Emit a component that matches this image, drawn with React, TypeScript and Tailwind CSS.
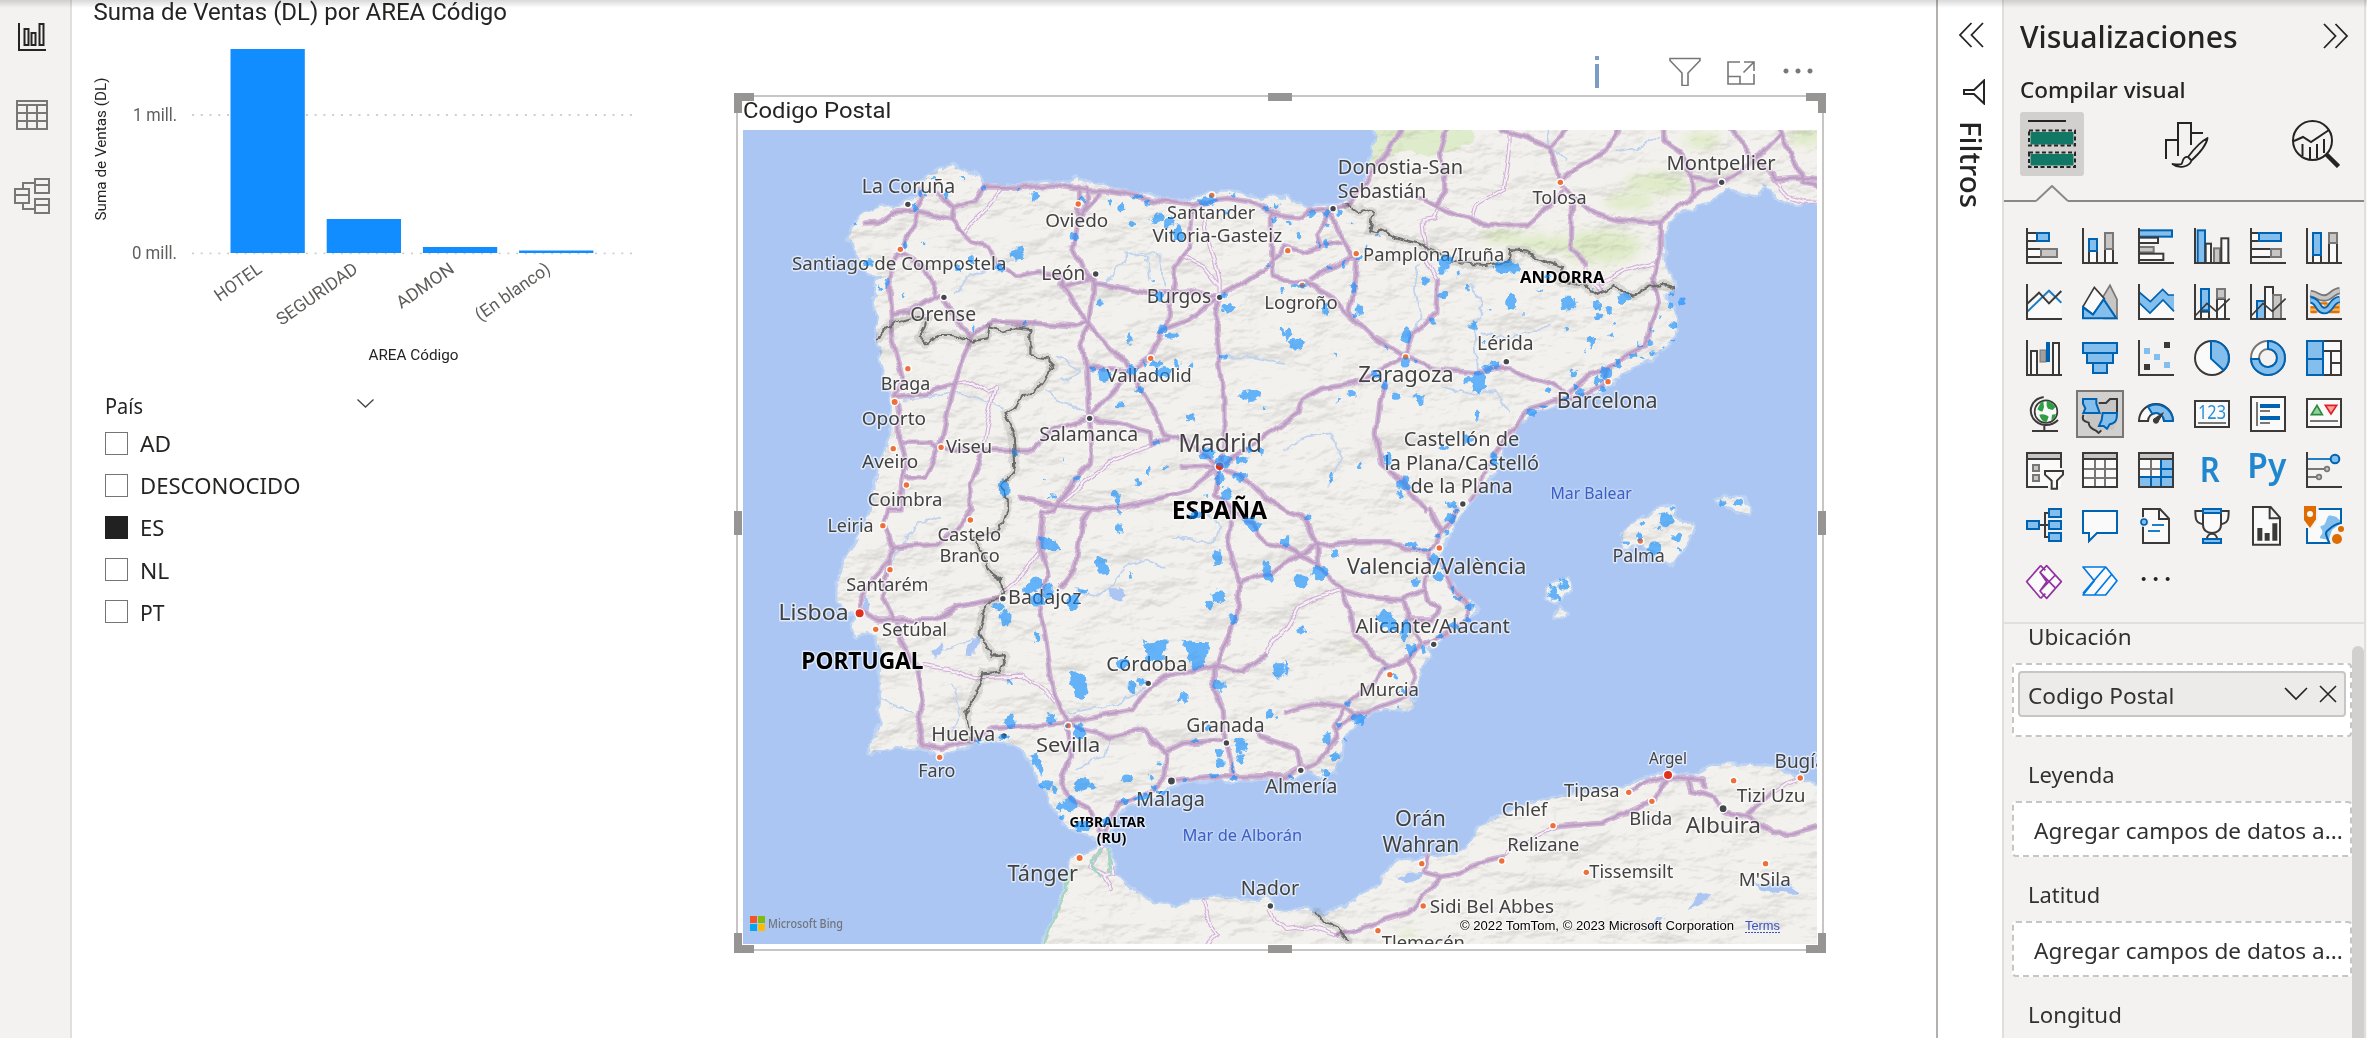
import { useLayoutEffect, useRef, useState } from "react";
import type { ReactNode } from "react";

/* ---------- text fitted to a given width ---------- */

function Fit({ w, className = "", children }: { w: number; className?: string; children: ReactNode }) {
  const ref = useRef<HTMLSpanElement>(null);
  const [scale, setScale] = useState(1);
  useLayoutEffect(() => {
    if (ref.current) setScale(w / ref.current.offsetWidth);
  }, [w]);
  return (
    <span
      ref={ref}
      className={`inline-block origin-left whitespace-nowrap ${className}`}
      style={{ transform: `scaleX(${scale})` }}
    >
      {children}
    </span>
  );
}

/* ---------- map geometry ---------- */

type Tile = "a" | "b" | "c" | "d";
const TILES: Record<Tile, [number, number, number]> = {
  a: [725, 80, 2.8],
  b: [1285, 50, 2.851],
  c: [725, 510, 2.8],
  d: [1285, 510, 2.851],
};

const px = (t: Tile, x: number) => TILES[t][0] + x / TILES[t][2];
const py = (t: Tile, y: number) => TILES[t][1] + y / 3;

/* A path is "a x,y x,y b x,y …": a letter selects the tile that the next points lie in. */
function path(src: string, close = false) {
  let tile: Tile = "a";
  const out: string[] = [];
  for (const tok of src.split(/\s+/)) {
    if (tok.length === 1) tile = tok as Tile;
    else {
      const [x, y] = tok.split(",").map(Number);
      out.push(`${px(tile, x).toFixed(1)},${py(tile, y).toFixed(1)}`);
    }
  }
  return "M" + out.join("L") + (close ? "Z" : "");
}

const LAND = [
  "a 425,775 430,720 420,690 425,640 420,610 440,590 400,575 385,560 370,520 368,500 345,475 355,445 375,420 395,400 430,385 480,378 510,365 535,350 545,330 525,320 560,300 575,280 590,275 605,262 612,272 640,255 655,272 690,280 710,290 722,315 800,318 850,312 920,308 965,312 975,300 985,292 1000,305 1030,312 1090,325 1140,340 1200,355 1260,362 1300,365 1340,345 1370,335 1410,335 1460,350 1500,360 1530,350 1568,360 b 0,440 30,455 60,475 110,470 140,470 170,460 200,435 225,405 245,340 258,260 262,220 1545,220 1545,465 1500,455 1470,465 1430,460 1400,445 1390,415 1360,405 1345,435 1300,430 1270,415 1240,430 1210,455 1160,475 1120,490 1095,520 1080,560 1080,600 1085,660 1110,700 1110,715 1085,730 1085,750 1105,780 1118,820 1110,860 1080,895 1040,930 960,965 940,990 900,1020 850,1040 790,1060 740,1075 700,1090 660,1130 630,1180 612,1230 590,1270 560,1310 530,1350 505,1385 d 490,25 465,80 445,110 440,150 450,180 470,220 500,255 525,275 550,298 520,320 490,345 460,370 430,395 405,420 412,440 392,460 380,500 375,530 350,565 375,580 350,600 300,595 260,600 220,620 190,650 165,690 160,740 140,780 110,805 85,790 50,785 20,810 0,805 c 1568,800 1430,812 1380,805 1300,812 1250,825 1200,860 1130,885 1100,910 1080,945 1068,990 1030,982 990,965 950,935 925,900 905,850 880,810 850,740 820,710 790,695 740,690 700,695 640,720 600,735 560,715 520,712 480,710 440,720 402,730 412,700 440,640 430,600 440,560 435,500 440,450 425,400 425,375 400,365 365,380 355,340 380,310 350,305 315,280 315,235 335,150 370,100 395,40 405,0 a 415,1260 425,1200 440,1140 465,1070 470,980 455,910 440,850",
  "c 880,1320 920,1230 945,1150 965,1080 970,1045 1000,1035 1050,1010 1080,1020 1090,1090 1130,1130 1200,1180 1260,1192 1340,1165 1420,1165 1500,1180 1510,1155 1525,1160 1535,1200 1568,1205 d 0,1205 60,1200 110,1212 180,1190 220,1150 270,1130 280,1090 330,1050 400,1045 440,1040 490,1035 520,1015 550,960 600,925 700,880 800,855 960,835 1040,800 1100,790 1160,800 1220,765 1400,770 1480,820 1545,830 1545,1330",
  "d 955,80 990,45 1040,10 b 1060,1380 1110,1372 d 1112,20 1130,42 1165,42 1150,90 1125,130 1100,160 1070,150 1050,125 1010,98 970,112",
  "b 1228,1352 1260,1342 1310,1350 1322,1375 d 1325,15 1300,10 1270,-8 1240,-20",
  "d 745,265 750,235 770,213 812,206 817,235 790,262 770,277",
  "d 770,318 782,290 805,315 785,320",
];

const BORDERS = [
  "a 425,775 470,730 540,708 565,715 560,738 545,770 560,790 600,768 640,768 690,785 735,775 740,742 780,752 810,745 855,750 855,825 900,835 920,855 890,910 860,942 830,945 815,980 785,1000 805,1050 810,1170 775,1220 792,1260 790,1290 c 785,10 770,60 690,85 715,110 735,180 775,210 780,245 725,300 710,370 750,440 785,435 770,485 725,490 700,560 675,600 690,690",
  "b 175,460 190,475 210,490 225,478 250,490 240,545 260,550 270,535 310,560 380,580 440,610 500,640 570,645 640,635 645,600 690,605 740,635 790,650 780,690 850,705 890,735 940,710 990,740 1040,710 1080,705 1110,715",
  "d 90,1205 110,1235 150,1255 180,1290",
];

const MAJOR = [
  "a 395,432 430,430 470,400 530,395 555,350 548,325",
  "a 600,345 640,385 700,365 725,320 800,322 850,322 915,315 970,325 1010,330 1080,335 1150,350 1230,365 1310,375 1360,362 1400,355 1470,365 1530,395 1568,410",
  "b 0,500 50,505 70,485 135,478 180,460 230,400 260,345 300,300 330,240",
  "a 540,400 500,500 465,550 460,650 465,700 470,780 490,860 500,900 475,950 485,1000 490,1080 510,1150 495,1200 490,1290 c 455,0 445,40 470,110 460,150 400,220 375,290",
  "a 540,400 635,420 665,460 690,485 740,500 760,550 820,585 880,575 940,590 950,625 1010,605 1035,590",
  "a 640,385 635,420",
  "a 490,520 560,560 585,610 580,650 610,650",
  "a 580,650 520,690 470,700",
  "a 610,655 640,710 690,765 750,725 850,728 980,738 1015,728",
  "a 940,610 1015,728 1130,860 1160,920 1230,1060 1290,1080 1385,1160",
  "a 1035,590 1030,650 1020,740 995,790 1010,860 1015,1000 1025,1080 1020,1150 970,1210 920,1290 c 890,0 880,100 905,200 880,280 900,400 920,550 955,630",
  "a 990,325 990,420 975,500 1000,560 1035,610 1100,620 1180,640 1290,630 1385,650",
  "a 1015,325 1015,375 990,420",
  "a 1055,335 1010,390",
  "a 1385,650 1450,610 1520,560 b 0,590 50,605 100,590 160,580",
  "a 1385,650 1375,740 1385,850 1400,960 1400,1080 1385,1160",
  "a 1385,650 1300,720 1230,750 1190,830 1130,870 1010,860",
  "a 1310,385 1300,500 1260,560 1240,740",
  "a 1020,1010 1140,870",
  "a 1020,1020 1100,1030 1190,1060 1195,1095 1240,1070",
  "a 1020,1015 920,1050 860,1110 750,1110 610,1105 575,1090 500,1090",
  "a 690,775 660,860 640,920 620,1000 600,1100 560,1190 510,1190",
  "a 475,950 560,940 640,915",
  "a 1530,395 1530,500 1535,590 b 0,690 60,700 130,740 190,800 250,860 340,920",
  "b 340,920 430,955 540,965 640,950 700,985 760,1005 800,1030 870,975 920,960 980,915 1030,890 1040,820 1065,760 1050,680 1070,600 1070,520",
  "b 920,960 910,1000 860,1030 780,1050 700,1075 640,1150 590,1220 560,1290 530,1350",
  "d 490,0 470,40 440,80 415,120",
  "b 340,920 200,1000 110,1015 50,1050 40,1090 0,1115 a 1500,1080 1430,1130 1385,1160",
  "b 285,1000 270,1060 260,1150 275,1240 330,1290 400,1380",
  "d 415,0 450,70",
  "b 340,920 370,850 430,790 435,690",
  "b 205,620 200,700 185,780 200,810",
  "b 75,690 130,650 200,620 150,540 135,490",
  "b 130,490 90,550 100,590",
  "b 460,240 440,310 455,370 455,430 430,465",
  "b 380,440 430,465 530,505 580,530 690,525 790,430",
  "b 790,410 755,290 690,265 620,240",
  "b 755,290 800,240",
  "b 790,390 850,340 920,300 950,240",
  "b 800,420 880,490 950,510 1070,518 1160,440 1245,395 1340,330 1415,250",
  "b 1245,395 1160,380 1140,320 1080,275 1080,240",
  "b 820,470 815,600 860,640",
  "b 1160,380 1165,430",
  "b 1280,240 1330,320 1400,390 1460,385 1530,390",
  "b 1410,240 1440,300 1480,400 1530,410",
  "a 1385,1160 1300,1230 1200,1260 1060,1290 930,1275 830,1255",
  "c 1030,0 1000,30 980,180 940,230",
  "a 1280,1165 1385,1160 1370,1240 1422,1290",
  "c 1422,0 1412,100 1442,225 1430,330 1380,460 1230,500 1180,540 1140,600 955,635",
  "c 1442,220 1500,195 1545,180 d 0,165 45,135 90,105 200,95 300,95 360,120 415,120",
  "a 1385,1160 1442,1185 1512,1254 d 0,3 43,15 70,55 91,105 93,170",
  "c 1422,0 1478,40 1490,75 1520,98 1545,103 d 20,125 93,165 160,240 240,262 330,270 400,240 415,130",
  "d 160,240 190,310 200,370 290,475 360,440 390,400 350,330 335,270",
  "d 290,475 180,580 140,650 150,680 90,760 45,780 35,720 0,705 c 1500,680 1490,660",
  "d 0,610 100,580 170,590 200,620",
  "d 350,440 370,500 350,560 270,590 200,620 150,660",
  "d 440,150 480,240 520,290 520,330 460,370 400,400",
  "d 400,240 405,270 435,290 420,330 350,330",
  "c 1370,460 1370,540 1395,600 1400,690 1420,790",
  "c 1370,465 1450,485 1510,440",
  "c 955,635 1000,660 1080,680 1170,660 1240,730 1235,800 1180,850 1100,880 1070,940 1060,980",
  "c 1240,720 1280,700 1400,690",
  "c 1250,812 1350,800 1568,800 d 50,770",
  "c 955,640 970,740 940,820 970,870 1020,890 1060,980",
  "c 955,640 800,655 740,660 700,690 640,705 600,715 550,705 540,640 555,570 540,480 490,390 480,340",
  "c 375,300 430,330 590,330 650,290 770,265",
  "c 460,150 440,260 470,330",
  "c 470,110 600,100 660,50 690,0 a 685,1210 720,1120",
  "d 150,1275 260,1240 350,1210 400,1150 445,1100 500,1090 580,1050 620,1040",
  "d 770,950 900,940 970,910 1050,870 1090,800 1190,810 1190,830",
  "d 980,845 1030,820 1090,800",
  "d 1150,810 1160,840 1220,860 1250,905 1320,920 1390,970 1450,970 1530,945",
  "d 1320,910 1385,850",
  "d 445,1100 400,1085 410,1040",
];

const MINOR = [
  "a 770,330 720,400 690,430 670,465",
  "a 1340,400 1345,450 1370,530 1385,600 1385,650",
  "a 1280,530 1340,560 1385,620",
  "a 720,1120 740,1000 760,920 740,935 690,905 650,910",
  "b 435,690 405,640 395,510 430,505 440,470",
  "b 640,240 640,290 620,420 540,470 530,500",
  "b 860,640 860,690 900,715",
  "b 900,700 960,665 1050,640",
  "b 1400,390 1430,440 1480,455 1530,455",
  "c 555,465 640,480 700,505 830,500 890,540 920,580",
  "c 780,245 830,200 880,130",
  "a 930,1280 1000,1210 1090,1140 1195,1095",
  "c 1510,440 1530,400 1568,360",
  "d 0,360 40,290 100,260 155,240",
  "c 1060,1010 1020,1070 1060,1095 1085,1090 1075,1050",
  "c 1060,1095 1080,1140",
  "c 1340,1170 1360,1240 1380,1270 1350,1305",
  "c 1525,1200 1540,1230 1568,1260 d 80,1250 150,1275",
  "d 620,1040 650,1010 770,950",
  "d 1385,850 1430,820 1470,805",
];

const RIVERS = [
  "a 640,640 680,590 760,560 810,540",
  "a 930,830 960,850 990,870 960,900 940,890",
  "a 900,930 930,960 980,980 1010,1000",
  "a 1060,620 1100,560 1130,520 1180,530 1190,600",
  "a 1400,830 1480,830 1568,850",
  "a 780,980 700,950 640,940 500,960",
  "a 1120,520 1220,520 1230,620",
  "b 550,960 540,850 560,760 530,700",
  "b 380,640 370,720 390,800 350,860",
  "b 450,1010 520,1030 600,1020 640,1090",
  "b 560,850 640,860 760,830",
  "b 800,330 760,300 750,240",
  "b 940,300 1010,290 1070,260",
  "b 0,1200 60,1160 130,1150 160,1230 120,1310",
  "c 980,230 1030,260 1080,230 1130,160 1170,150 1230,170",
  "c 620,420 680,390 710,380 700,430",
  "c 440,570 500,600 530,610",
  "c 1260,80 1370,100 1390,50 1340,0",
  "c 960,610 1100,580 1200,520",
  "c 980,780 1060,740 1080,690",
  "c 460,160 540,40 600,20",
  "c 640,520 660,620 640,660",
];

/* Green lowlands and woods: centre, radii */
const WOODS: [Tile, number, number, number, number][] = [
  ["b", 900, 590, 110, 50],
  ["b", 620, 560, 60, 22],
  ["b", 1060, 400, 90, 30],
  ["b", 980, 455, 70, 22],
  ["b", 740, 580, 80, 24],
  ["b", 1490, 260, 50, 26],
  ["b", 1190, 270, 50, 24],
  ["d", 195, 410, 14, 10],
  ["d", 350, 1275, 20, 14],
];

/* Postal-code areas: centre x, centre y, width, height */
const AREAS: [Tile, number, number, number, number][] = [
  ["a", 583, 296, 12, 8], ["a", 665, 296, 10, 12], ["a", 618, 350, 14, 24], ["a", 548, 338, 18, 20], ["a", 722, 326, 12, 12],
  ["a", 823, 330, 9, 9], ["a", 870, 345, 22, 26], ["a", 532, 380, 14, 24], ["a", 365, 433, 9, 9], ["a", 503, 497, 14, 24],
  ["a", 557, 492, 7, 7], ["a", 690, 540, 12, 24], ["a", 818, 517, 36, 36], ["a", 772, 562, 24, 26], ["a", 652, 562, 14, 14],
  ["a", 454, 615, 14, 26], ["a", 432, 630, 10, 12], ["a", 498, 644, 8, 16], ["a", 400, 550, 26, 18], ["a", 840, 726, 9, 14],
  ["a", 980, 468, 28, 14], ["a", 1003, 355, 12, 14], ["a", 1079, 367, 8, 14], ["a", 1110, 384, 16, 26], ["a", 1136, 435, 20, 20],
  ["a", 1150, 350, 34, 12], ["a", 1183, 368, 14, 20], ["a", 1212, 412, 40, 32], ["a", 1247, 425, 26, 24], ["a", 1272, 460, 30, 48],
  ["a", 1355, 365, 50, 30], ["a", 1422, 345, 14, 12], ["a", 1405, 398, 12, 12], ["a", 1515, 385, 16, 12], ["a", 1543, 378, 14, 16],
  ["a", 1536, 418, 12, 16], ["a", 1525, 556, 14, 8], ["a", 1562, 632, 12, 22], ["a", 1196, 604, 9, 12], ["a", 1215, 650, 24, 24],
  ["a", 1050, 668, 18, 22], ["a", 1398, 645, 18, 16], ["a", 1408, 680, 28, 30], ["a", 1132, 774, 16, 30], ["a", 1227, 748, 22, 26],
  ["a", 1252, 768, 38, 18], ["a", 695, 745, 6, 20], ["a", 1175, 852, 14, 14], ["a", 1208, 852, 38, 14], ["a", 1265, 850, 20, 20],
  ["a", 1306, 852, 12, 14], ["a", 1235, 875, 50, 26], ["a", 1140, 870, 30, 30], ["a", 1062, 890, 36, 40], ["a", 1028, 868, 14, 14],
  ["a", 1392, 832, 28, 12], ["a", 1157, 928, 24, 18], ["a", 1106, 974, 28, 18], ["a", 1308, 1012, 26, 18], ["a", 1475, 948, 66, 30],
  ["a", 1515, 987, 10, 12], ["a", 1562, 760, 12, 30], ["a", 1207, 1088, 18, 18], ["a", 1232, 1160, 14, 8], ["a", 1183, 1170, 18, 24],
  ["a", 1160, 1205, 18, 24], ["a", 1093, 1243, 26, 24], ["a", 1101, 1272, 8, 36], ["a", 985, 1196, 22, 18], ["a", 914, 1248, 18, 14],
  ["a", 895, 1195, 5, 5], ["a", 811, 1118, 14, 20], ["a", 783, 1222, 30, 44], ["a", 947, 1140, 6, 6], ["a", 1445, 1190, 38, 26],
  ["a", 1385, 1200, 22, 40], ["a", 1402, 1245, 28, 40], ["a", 1440, 1140, 40, 20], ["a", 1345, 1120, 44, 30], ["a", 1395, 1140, 40, 40],
  ["a", 1350, 1248, 8, 10], ["a", 1502, 1115, 18, 24], ["a", 1470, 1112, 20, 16],
  ["b", 75, 492, 18, 22], ["b", 118, 492, 22, 20], ["b", 155, 490, 14, 20], ["b", 40, 558, 12, 22], ["b", 120, 525, 12, 10],
  ["b", 118, 580, 14, 26], ["b", 99, 584, 9, 12], ["b", 194, 526, 6, 6], ["b", 10, 515, 18, 10], ["b", 265, 558, 14, 10],
  ["b", 212, 622, 22, 14], ["b", 231, 590, 8, 24], ["b", 197, 712, 16, 36], ["b", 168, 645, 10, 24], ["b", 128, 655, 12, 12],
  ["b", 213, 783, 22, 28], ["b", 197, 793, 10, 12], ["b", 115, 775, 14, 40], ["b", 43, 706, 46, 12], ["b", 400, 690, 22, 24],
  ["b", 453, 735, 26, 18], ["b", 460, 640, 38, 46], ["b", 445, 665, 18, 26], ["b", 495, 673, 12, 14], ["b", 518, 714, 20, 12],
  ["b", 643, 752, 26, 46], ["b", 582, 782, 8, 5], ["b", 682, 790, 5, 8], ["b", 728, 722, 14, 8], ["b", 633, 655, 72, 36],
  ["b", 750, 680, 16, 14], ["b", 803, 760, 44, 42], ["b", 888, 765, 26, 26], ["b", 892, 798, 20, 16], ["b", 925, 778, 16, 20],
  ["b", 877, 718, 7, 8], ["b", 970, 745, 38, 32], ["b", 1103, 734, 12, 12], ["b", 1130, 755, 16, 22], ["b", 1098, 768, 16, 14],
  ["b", 1105, 822, 20, 18], ["b", 1068, 795, 6, 10], ["b", 1047, 842, 9, 8], ["b", 940, 823, 9, 9], ["b", 932, 855, 18, 14],
  ["b", 872, 877, 18, 32], ["b", 855, 904, 5, 5], ["b", 800, 836, 12, 16], ["b", 536, 826, 26, 22], ["b", 423, 810, 16, 26],
  ["b", 349, 856, 28, 46], ["b", 345, 940, 22, 30], ["b", 290, 895, 10, 6], ["b", 372, 932, 10, 10], ["b", 253, 972, 26, 18],
  ["b", 285, 1003, 18, 24], ["b", 145, 912, 8, 10], ["b", 193, 1030, 26, 20], ["b", 157, 1052, 8, 9], ["b", 313, 1041, 26, 22],
  ["b", 381, 1050, 24, 32], ["b", 547, 1094, 16, 28], ["b", 545, 985, 46, 40], ["b", 578, 955, 30, 28], ["b", 602, 940, 26, 22],
  ["b", 556, 1010, 42, 34], ["b", 525, 990, 24, 18], ["b", 567, 875, 12, 10], ["b", 820, 972, 20, 20], ["b", 746, 1020, 18, 16],
  ["b", 915, 965, 34, 40], ["b", 893, 988, 20, 26], ["b", 905, 1018, 26, 10], ["b", 845, 1030, 28, 16], ["b", 800, 1045, 18, 12],
  ["b", 735, 1072, 24, 10], ["b", 700, 1084, 28, 20], ["b", 990, 916, 26, 12], ["b", 1048, 907, 18, 16], ["b", 1015, 882, 16, 8],
  ["b", 1043, 880, 16, 10], ["b", 948, 945, 20, 26], ["b", 1020, 928, 18, 10], ["b", 1078, 890, 10, 8], ["b", 1105, 868, 12, 6],
  ["b", 8, 850, 14, 36], ["b", 35, 880, 40, 34], ["b", 525, 1168, 28, 22], ["b", 455, 1194, 26, 14], ["b", 595, 1232, 22, 36],
  ["b", 293, 1232, 18, 36], ["b", 336, 1298, 36, 36], ["b", 327, 1330, 14, 24], ["b", 215, 1245, 12, 20], ["b", 134, 1282, 14, 32],
  ["b", 476, 1365, 34, 24], ["b", 1292, 1358, 28, 18], ["b", 1245, 1362, 14, 18], ["b", 1105, 1376, 18, 8], ["b", 828, 1010, 14, 14],
  ["c", 1107, 50, 14, 34], ["c", 1105, 5, 10, 16], ["c", 1138, 196, 12, 8],
  ["c", 1385, 262, 36, 40], ["c", 1357, 285, 26, 16], ["c", 1421, 330, 24, 30],
  ["c", 1315, 14, 36, 22], ["c", 1562, 95, 18, 20], ["c", 870, 220, 34, 40], ["c", 908, 240, 34, 40],
  ["c", 850, 240, 22, 30], ["c", 875, 275, 38, 40], ["c", 972, 280, 36, 44], ["c", 1000, 243, 34, 14], ["c", 875, 380, 18, 22],
  ["c", 785, 320, 30, 50], ["c", 768, 288, 34, 24], ["c", 797, 518, 16, 8], ["c", 1383, 530, 34, 36],
  ["c", 1282, 563, 24, 28], ["c", 1138, 530, 14, 36], ["c", 1160, 512, 26, 16], ["c", 1112, 456, 34, 32],
  ["c", 1552, 478, 34, 46], ["c", 1525, 612, 18, 24], ["c", 1546, 625, 10, 10],
  ["c", 798, 640, 24, 44], ["c", 912, 628, 22, 34], ["c", 990, 660, 36, 44], ["c", 958, 650, 14, 18], ["c", 780, 680, 28, 16],
  ["c", 707, 694, 24, 8], ["c", 1003, 825, 44, 46], ["c", 1030, 832, 20, 18], ["c", 1124, 808, 36, 24], ["c", 1190, 800, 9, 10],
  ["c", 1214, 760, 14, 12], ["c", 1317, 690, 20, 14], ["c", 1385, 728, 16, 28], ["c", 1388, 760, 30, 24], ["c", 1445, 710, 36, 40],
  ["c", 1443, 748, 22, 34], ["c", 1365, 797, 34, 14], ["c", 1423, 805, 26, 14], ["c", 897, 822, 40, 26],
  ["c", 925, 838, 16, 24], ["c", 970, 882, 48, 40], ["c", 943, 892, 26, 20], ["c", 1003, 955, 48, 28], ["c", 943, 923, 9, 9],
  ["c", 1117, 872, 24, 18], ["c", 1165, 860, 40, 20], ["c", 1220, 845, 26, 14], ["c", 1203, 830, 14, 14], ["c", 1068, 935, 24, 22],
  ["c", 1290, 808, 10, 8], ["c", 1350, 656, 12, 22], ["c", 1422, 780, 10, 30],
  ["d", 62, 20, 20, 18], ["d", 3, 90, 18, 36], ["d", 143, 127, 24, 28], ["d", 105, 187, 50, 42], ["d", 49, 216, 42, 40],
  ["d", 45, 367, 28, 26], ["d", 3, 475, 12, 44], ["d", 340, 350, 26, 40], ["d", 337, 378, 20, 26],
  ["d", 360, 415, 28, 32], ["d", 395, 420, 14, 18], ["d", 372, 218, 28, 20], ["d", 360, 107, 34, 22], ["d", 395, 119, 40, 8],
  ["d", 423, 148, 22, 32], ["d", 435, 200, 34, 20], ["d", 478, 240, 12, 22], ["d", 492, 263, 22, 12], ["d", 530, 290, 30, 18],
  ["d", 520, 327, 12, 10], ["d", 480, 350, 28, 18], ["d", 440, 380, 20, 16], ["d", 470, 25, 26, 26], ["d", 434, 75, 12, 14],
  ["d", 463, 68, 16, 14], ["d", 490, 2, 14, 10], ["d", 222, 184, 14, 10], ["d", 312, 500, 10, 14], ["d", 335, 545, 14, 24],
  ["d", 284, 477, 8, 10], ["d", 180, 578, 18, 22], ["d", 214, 625, 40, 34], ["d", 152, 642, 16, 14], ["d", 121, 686, 24, 30],
  ["d", 143, 740, 28, 20], ["d", 117, 790, 16, 24], ["d", 168, 688, 6, 10], ["d", 322, 590, 6, 6], ["d", 450, 170, 10, 16],
  ["d", 1088, 25, 38, 44], ["d", 1070, 55, 18, 14], ["d", 1022, 38, 10, 16], ["d", 1012, 82, 16, 22], ["d", 970, 100, 18, 10],
  ["d", 1050, 115, 38, 34], ["d", 1118, 82, 24, 30], ["d", 1125, 118, 10, 10], ["d", 766, 240, 24, 32], ["d", 800, 228, 30, 34],
  ["d", 770, 262, 34, 18], ["d", 15, 803, 9, 14],
];

/* Larger areas with their own outlines */
const AREA_SHAPES = [
  "c 1278,392 1310,396 1355,396 1350,430 1338,470 1310,483 1300,440",
  "c 1168,390 1185,402 1200,395 1210,388 1240,392 1238,412 1228,430 1222,448 1196,454 1176,446 1184,420",
  "c 966,486 992,484 1010,494 1012,520 1018,550 1000,570 986,566 974,540 968,520",
  "c 1034,140 1062,140 1068,158 1078,170 1072,192 1050,194 1040,170",
  "c 1366,126 1384,120 1392,140 1390,164 1370,168 1364,146",
  "c 876,74 900,84 925,90 942,124 906,122 882,112",
  "c 1508,156 1522,150 1528,180 1536,214 1516,210 1506,190",
  "c 1450,26 1478,22 1502,40 1496,62 1478,68 1466,50",
  "c 852,738 874,730 882,756 892,780 886,794 872,772",
  "d 264,318 276,302 296,304 304,320 320,334 318,356 298,364 278,350 266,330",
];

/* Irregular outline around a centre; the seed keeps it the same on every paint. */
function blob([t, cx, cy, w, h]: [Tile, number, number, number, number], seed: number) {
  const n = 11;
  const p: string[] = [];
  for (let i = 0; i < n; i++) {
    const r = 0.66 + 0.5 * Math.abs(Math.sin(seed * 12.9898 + i * 78.233));
    const a = (i / n) * Math.PI * 2;
    p.push(
      `${(px(t, cx) + (Math.cos(a) * r * w) / 2 / 2.7).toFixed(1)},${(py(t, cy) + (Math.sin(a) * r * h) / 2 / 2.8).toFixed(1)}`,
    );
  }
  return "M" + p.join("L") + "Z";
}

const DOTS: [Tile, number, number, "k" | "o" | "r", number?][] = [
  ["a", 512, 373, "k"], ["a", 491, 508, "o"], ["a", 613, 652, "k"], ["a", 989, 372, "o"], ["a", 1363, 346, "o"],
  ["a", 1038, 582, "k"], ["a", 1385, 652, "k"], ["a", 1192, 835, "o"], ["a", 512, 866, "o"], ["a", 475, 966, "o", 3],
  ["a", 471, 1106, "o"], ["a", 605, 1102, "o"], ["a", 508, 1215, "o"], ["a", 1021, 1015, "k"], ["a", 1385, 1159, "r", 3.8],
  ["b", 137, 476, "k"], ["b", 203, 611, "o"], ["b", 49, 706, "o"], ["b", 8, 602, "o"], ["b", 785, 397, "o"],
  ["b", 1245, 397, "k"], ["b", 344, 921, "o"], ["b", 631, 935, "k"], ["b", 921, 995, "o"], ["b", 507, 1362, "k"],
  ["c", 442, 47, "o"], ["c", 687, 30, "o"], ["c", 462, 179, "o"], ["c", 377, 310, "r", 4], ["c", 422, 358, "o"],
  ["c", 778, 266, "k"], ["c", 1185, 520, "k"], ["c", 961, 647, "o"], ["c", 781, 678, "k"], ["c", 601, 742, "o"],
  ["c", 1250, 813, "k", 3.4], ["c", 1404, 699, "k"], ["c", 993, 1044, "o", 3], ["c", 1527, 1188, "k"],
  ["d", 440, 114, "o"], ["d", 1013, 93, "o"], ["d", 424, 403, "k"], ["d", 299, 494, "o"], ["d", 45, 781, "k"],
  ["d", 1092, 795, "r", 4], ["d", 980, 847, "o"], ["d", 1046, 874, "o"], ["d", 764, 947, "o"], ["d", 618, 1053, "o"],
  ["d", 390, 1061, "o"], ["d", 394, 1188, "o"], ["d", 265, 1262, "o"], ["d", 859, 1087, "o"], ["d", 1370, 1061, "o"],
  ["d", 1249, 896, "k", 3.4], ["d", 1279, 812, "o"], ["d", 1469, 804, "o"],
];
const DOT_FILL = { k: "#45484b", o: "#ee6f38", r: "#e0301e" };

/* Place names: tile, left, right, baseline, size, text */
const PLACES: [Tile, number, number, number, number, string][] = [
  ["a", 385, 645, 338, 19.5, "La Coruña"],
  ["a", 190, 788, 571, 18.5, "Santiago de Compostela"],
  ["a", 521, 703, 723, 19.5, "Orense"],
  ["a", 899, 1073, 442, 18, "Oviedo"],
  ["a", 1240, 1485, 417, 18, "Santander"],
  ["a", 1199, 1560, 486, 18, "Vitoria-Gasteiz"],
  ["a", 888, 1009, 601, 19.5, "León"],
  ["a", 1183, 1361, 670, 19.5, "Burgos"],
  ["a", 1070, 1307, 905, 18, "Valladolid"],
  ["a", 438, 575, 930, 18, "Braga"],
  ["a", 385, 563, 1036, 18, "Oporto"],
  ["a", 621, 748, 1119, 18, "Viseu"],
  ["a", 386, 541, 1165, 18, "Aveiro"],
  ["a", 402, 609, 1279, 18, "Coimbra"],
  ["a", 882, 1157, 1082, 19.5, "Salamanca"],
  ["a", 1271, 1504, 1115, 24.5, "Madrid"],
  ["a", 1512, 1716, 686, 18, "Logroño"],
  ["b", 153, 508, 372, 19.5, "Donostia-San"],
  ["b", 153, 403, 443, 19.5, "Sebastián"],
  ["b", 225, 625, 633, 18, "Pamplona/Iruña"],
  ["b", 708, 860, 462, 18, "Tolosa"],
  ["b", 1090, 1399, 359, 19.5, "Montpellier"],
  ["b", 550, 709, 901, 19.5, "Lérida"],
  ["b", 211, 481, 995, 22, "Zaragoza"],
  ["b", 777, 1062, 1074, 22, "Barcelona"],
  ["b", 341, 668, 1189, 19.5, "Castellón de"],
  ["b", 286, 724, 1259, 19.5, "la Plana/Castelló"],
  ["b", 360, 649, 1329, 19.5, "de la Plana"],
  ["c", 289, 416, 66, 18, "Leiria"],
  ["c", 597, 773, 93, 18, "Castelo"],
  ["c", 603, 769, 156, 18, "Branco"],
  ["c", 342, 570, 242, 18, "Santarém"],
  ["c", 152, 346, 329, 22, "Lisboa"],
  ["c", 442, 622, 379, 18, "Setúbal"],
  ["c", 795, 998, 281, 19.5, "Badajoz"],
  ["c", 1070, 1295, 482, 19, "Córdoba"],
  ["c", 580, 757, 692, 19.5, "Huelva"],
  ["c", 873, 1051, 725, 20, "Sevilla"],
  ["c", 543, 645, 801, 18, "Faro"],
  ["c", 1294, 1511, 665, 20, "Granada"],
  ["c", 1153, 1344, 887, 20, "Málaga"],
  ["c", 1515, 1715, 848, 19.5, "Almería"],
  ["c", 793, 988, 1112, 22, "Tánger"],
  ["c", 1446, 1608, 1155, 20, "Nador"],
  ["d", 178, 688, 191, 22, "Valencia/València"],
  ["d", 203, 641, 369, 20, "Alicante/Alacant"],
  ["d", 213, 382, 558, 18, "Murcia"],
  ["d", 936, 1083, 157, 18, "Palma"],
  ["d", 316, 459, 949, 22, "Orán"],
  ["d", 280, 497, 1025, 22, "Wahran"],
  ["d", 1040, 1146, 763, 16, "Argel"],
  ["d", 798, 954, 860, 18, "Tipasa"],
  ["d", 620, 748, 917, 18, "Chlef"],
  ["d", 984, 1104, 944, 18, "Blida"],
  ["d", 1145, 1357, 970, 22, "Albuira"],
  ["d", 1290, 1484, 876, 18, "Tizi Uzu"],
  ["d", 1398, 1542, 773, 19, "Bugía"],
  ["d", 636, 839, 1022, 18, "Relizane"],
  ["d", 870, 1107, 1105, 18, "Tissemsilt"],
  ["d", 1296, 1442, 1127, 18, "M'Sila"],
  ["d", 415, 767, 1210, 18, "Sidi Bel Abbes"],
  ["d", 278, 513, 1318, 18, "Tlemecén"],
];
const COUNTRIES: [Tile, number, number, number, number, string][] = [
  ["a", 1253, 1518, 1318, 25, "ESPAÑA"],
  ["c", 216, 556, 476, 23.5, "PORTUGAL"],
  ["b", 672, 911, 700, 16.5, "ANDORRA"],
  ["c", 967, 1177, 950, 14.5, "GIBRALTAR"],
  ["c", 1043, 1124, 999, 14.5, "(RU)"],
];
const SEAS: [Tile, number, number, number, number, string][] = [
  ["b", 759, 989, 1347, 16, "Mar Balear"],
  ["c", 1283, 1616, 993, 16, "Mar de Alborán"],
];

function Label({ d: [t, l, r, y, size, s], className }: { d: [Tile, number, number, number, number, string]; className: string }) {
  return (
    <text
      x={px(t, l) - 0.8}
      y={py(t, y)}
      fontSize={size}
      textLength={(r - l) / TILES[t][2] + 0.8}
      lengthAdjust="spacingAndGlyphs"
      className={className}
      strokeWidth={3}
      strokeOpacity={0.6}
      strokeLinejoin="round"
      paintOrder="stroke"
    >
      {s}
    </text>
  );
}

const LAND_D = LAND.map((l) => path(l, true)).join("");
const MAJOR_D = MAJOR.map((l) => path(l)).join("");
const MINOR_D = MINOR.map((l) => path(l)).join("");
const RIVER_D = RIVERS.map((l) => path(l)).join("");
const BORDER_D = BORDERS.map((l) => path(l)).join("");

function IberiaMap() {
  return (
    <svg viewBox="743 130 1074 814" className="block h-[814px] w-[1074px] bg-[#abc6f2]">
      <defs>
        <clipPath id="land">
          <path d={LAND_D} />
        </clipPath>
        <filter id="relief" x="0" y="0" width="1" height="1" colorInterpolationFilters="sRGB">
          <feTurbulence type="fractalNoise" baseFrequency="0.018 0.034" numOctaves={5} seed={7} />
          <feDiffuseLighting surfaceScale={9} diffuseConstant={1.16} lightingColor="#ffffff">
            <feDistantLight azimuth={235} elevation={60} />
          </feDiffuseLighting>
        </filter>
        <filter id="rough" x="0" y="0" width="1" height="1">
          <feTurbulence type="fractalNoise" baseFrequency="0.09" numOctaves={3} seed={3} result="n" />
          <feDisplacementMap in="SourceGraphic" in2="n" scale={8} xChannelSelector="R" yChannelSelector="G" />
        </filter>
        <filter id="wavy" x="0" y="0" width="1" height="1">
          <feTurbulence type="fractalNoise" baseFrequency="0.05" numOctaves={2} seed={5} result="n" />
          <feDisplacementMap in="SourceGraphic" in2="n" scale={8} xChannelSelector="R" yChannelSelector="G" />
        </filter>
        <filter id="rougher" x="0" y="0" width="1" height="1">
          <feTurbulence type="fractalNoise" baseFrequency="0.16" numOctaves={2} seed={9} result="n" />
          <feDisplacementMap in="SourceGraphic" in2="n" scale={8} xChannelSelector="R" yChannelSelector="G" />
        </filter>
        <filter id="soft" x="-0.3" y="-0.3" width="1.6" height="1.6">
          <feGaussianBlur stdDeviation={5} />
        </filter>
      </defs>

      <g filter="url(#rough)">
        <rect x="743" y="130" width="1074" height="814" fill="#abc6f2" />
        <path d={LAND_D} fill="none" stroke="#c3d9f5" strokeWidth={5} strokeLinejoin="round" opacity={0.7} />
        <path d={LAND_D} fill="#f3f1ed" />
        <g clipPath="url(#land)">
          <path d={path("b 240,220 530,220 540,270 500,300 460,300 430,320 330,300 270,330 230,380", true)} fill="#dfeccb" />
          <g filter="url(#soft)">
            {WOODS.map(([t, x, y, rx, ry], i) => (
              <ellipse key={i} cx={px(t, x)} cy={py(t, y)} rx={rx / 2.8} ry={ry / 3} fill="#dfebc8" />
            ))}
          </g>
        </g>
      </g>
      <g clipPath="url(#land)" className="mix-blend-multiply">
        <rect x="743" y="130" width="1074" height="814" filter="url(#relief)" opacity={0.16} />
      </g>

      <g filter="url(#rough)" fill="none" strokeLinejoin="round" strokeLinecap="round">
        <path d={RIVER_D} stroke="#bfd3ee" strokeWidth={1.8} />
        <g fill="#abc6f2">
          <path d={path("d 320,1105 350,1092 400,1088 390,1100 340,1118", true)} />
          <path d={path("d 1145,1200 1175,1155 1215,1152 1205,1170", true)} />
          <path d={path("d 1320,1110 1370,1125 1420,1125 1440,1120 1468,1148 1430,1148 1370,1142", true)} />
          <path d={path("d 1020,1258 1060,1225 1085,1228 1060,1250", true)} />
          <path d={path("c 385,290 395,250 405,290 398,310", true)} />
          <path d={path("c 575,425 605,400 615,425 590,440", true)} />
          <path d={path("c 1070,235 1110,235 1125,260 1105,275 1085,265", true)} />
          <path d={path("c 690,390 705,380 712,400 690,440 670,435", true)} />
        </g>
      </g>
      <g filter="url(#wavy)" fill="none" strokeLinejoin="round" strokeLinecap="round">
        <path d={MINOR_D} stroke="#cfb0d4" strokeWidth={4.2} />
        <path d={MINOR_D} stroke="#f7f0f6" strokeWidth={2} />
        <path d={MAJOR_D} stroke="#d0b4d5" strokeWidth={5.4} />
        <path d={MAJOR_D} stroke="#bb9dc1" strokeWidth={2.2} />
      </g>
      <g filter="url(#rough)" fill="none" strokeLinejoin="round" strokeLinecap="round">
        <path d={path("c 895,1301 920,1230 948,1160 968,1080")} stroke="#a5d5c3" strokeWidth={3} />
        <path d={path("c 1075,1020 1080,1090")} stroke="#a5d5c3" strokeWidth={3} />
        <path d={path("c 1055,1020 1025,1060 1050,1095")} stroke="#a5d5c3" strokeWidth={3} />
        <path d={BORDER_D} stroke="#000000" strokeOpacity={0.1} strokeWidth={9} />
        <path d={BORDER_D} stroke="#6b6b6a" strokeWidth={2.2} />
      </g>

      {DOTS.map(([t, x, y, c, r = 2.7], i) => (
        <g key={i}>
          <circle cx={px(t, x)} cy={py(t, y)} r={r + 1.4} fill="#ffffff" />
          <circle cx={px(t, x)} cy={py(t, y)} r={r} fill={DOT_FILL[c]} />
        </g>
      ))}
      {PLACES.map((d) => (
        <Label key={d[5]} d={d} className="fill-[#424242] stroke-white" />
      ))}
      {SEAS.map((d) => (
        <Label key={d[5]} d={d} className="fill-[#3c5fc4] stroke-[#c9daf7]" />
      ))}
      {COUNTRIES.map((d) => (
        <Label key={d[5]} d={d} className="fill-black stroke-white font-bold" />
      ))}

      <g filter="url(#rougher)" fill="#118dff" opacity={0.62}>
        {AREAS.map((a, i) => (
          <path key={i} d={blob(a, i + 1)} />
        ))}
        {AREA_SHAPES.map((s) => (
          <path key={s} d={path(s, true)} />
        ))}
      </g>

      <g>
        <path d="M750 916h7v7h-7z" fill="#f35325" />
        <path d="M758 916h7v7h-7z" fill="#81bc06" />
        <path d="M750 924h7v7h-7z" fill="#05a6f0" />
        <path d="M758 924h7v7h-7z" fill="#ffba08" />
        <text x="768" y="927.5" fontSize="13" textLength="75" lengthAdjust="spacingAndGlyphs" className="fill-[#70747c] font-medium">
          Microsoft Bing
        </text>
      </g>
      <g className="font-['Liberation_Sans',Arial,sans-serif]">
        <text x="1460" y="929.5" fontSize="13.2" textLength="274" lengthAdjust="spacingAndGlyphs" className="fill-black stroke-white" strokeOpacity={0.6} strokeWidth={2} paintOrder="stroke">
          © 2022 TomTom, © 2023 Microsoft Corporation
        </text>
        <text x="1745" y="929.5" fontSize="13.2" textLength="35" lengthAdjust="spacingAndGlyphs" className="fill-[#3653c0]">
          Terms
        </text>
        <path d="M1745 932.5h35" stroke="#3653c0" strokeDasharray="2 1" />
      </g>
    </svg>
  );
}

/* ---------- bar chart ---------- */

const BARS = [
  { name: "HOTEL", y: 49, len: 53 },
  { name: "SEGURIDAD", y: 219, len: 95 },
  { name: "ADMON", y: 247, len: 66 },
  { name: "(En blanco)", y: 250.5, len: 87 },
];

function SalesChart() {
  return (
    <svg viewBox="72 0 600 380" className="block h-[380px] w-[600px] font-['Roboto',sans-serif]">
      <text x="93.500" y="20" fontSize="23.5" textLength="413.5" lengthAdjust="spacingAndGlyphs" className="fill-[#252423]">
        Suma de Ventas (DL) por AREA Código
      </text>
      <text transform="translate(106 220.5) rotate(-90)" fontSize="14.5" textLength="143" lengthAdjust="spacingAndGlyphs" className="fill-[#252423]">
        Suma de Ventas (DL)
      </text>
      <g className="fill-[#605e5c]" fontSize="18.5">
        <text x="133" y="121" textLength="44" lengthAdjust="spacingAndGlyphs">1 mill.</text>
        <text x="132" y="259" textLength="45" lengthAdjust="spacingAndGlyphs">0 mill.</text>
      </g>
      <g stroke="#d0cfce" strokeWidth="1.8" strokeDasharray="2 6.76">
        <path d="M192 115H632" />
        <path d="M192 253.3H632" />
      </g>
      {BARS.map((b, i) => (
        <g key={b.name}>
          <rect x={230.5 + i * 96.2} y={b.y} width={74.3} height={253 - b.y} fill="#118dff" />
          <text
            transform={`translate(${263 + i * 96.2} 271.5) rotate(-35)`}
            textAnchor="end"
            fontSize="17.5"
            textLength={b.len}
            lengthAdjust="spacingAndGlyphs"
            className="fill-[#605e5c]"
          >
            {b.name}
          </text>
        </g>
      ))}
      <text x="368.5" y="360" fontSize="15.5" textLength="90" lengthAdjust="spacingAndGlyphs" className="fill-[#252423]">
        AREA Código
      </text>
    </svg>
  );
}

/* ---------- slicer ---------- */

const COUNTRY_ROWS: { code: string; w: number; on?: boolean }[] = [
  { code: "AD", w: 31 },
  { code: "DESCONOCIDO", w: 161 },
  { code: "ES", w: 24, on: true },
  { code: "NL", w: 29 },
  { code: "PT", w: 25 },
];

function CountrySlicer() {
  return (
    <div className="ml-[33px] mt-[9px] w-[280px] text-[#252423]">
      <div className="flex h-[33px] items-center justify-between pr-[11px]">
        <Fit w={38} className="text-[21px] leading-[30px]">País</Fit>
        <svg viewBox="0 0 17 9" className="-mt-[4px] h-[9px] w-[17px]">
          <path d="M.5 .5l8 7.5l8-7.5" fill="none" stroke="#444" strokeWidth="1.3" />
        </svg>
      </div>
      {COUNTRY_ROWS.map((r) => (
        <div key={r.code} className="flex h-[42.2px] items-center gap-[12px]">
          <span className={r.on ? "h-[23px] w-[23px] bg-[#212121]" : "h-[23px] w-[23px] border border-[#757575] bg-white"} />
          <Fit w={r.w} className="text-[22px] leading-[30px]">{r.code}</Fit>
        </div>
      ))}
    </div>
  );
}

/* ---------- left rail ---------- */

function Rail() {
  return (
    <nav className="flex w-[72px] shrink-0 flex-col items-center border-r-2 border-[#e1dfdd] bg-[#f3f2f1] pr-[6px]">
      <svg viewBox="0 0 28 28" className="mt-[23px] h-[28px] w-[28px] shrink-0">
        <path d="M1 0v27h27M6.5 6h4v16h-4zM13.5 10h4v12h-4zM21.5 1h4v21h-4z" fill="none" stroke="#252423" strokeWidth="2" />
      </svg>
      <svg viewBox="0 0 32 30" className="mt-[49px] h-[30px] w-[32px] shrink-0">
        <path d="M1 1h30v28H1zM1 5h30M1 13h30M1 21h30M11 5v24M21 5v24" fill="none" stroke="#797775" strokeWidth="2" />
      </svg>
      <svg viewBox="0 0 36 36" className="mt-[48px] h-[36px] w-[36px] shrink-0">
        <path d="M21 1h14v14H21zM21 7h14M21 21h14v14H21zM21 27h14M1 11h14v14H1zM1 17h14M9 11V5h12M9 25v6h12" fill="none" stroke="#797775" strokeWidth="2" />
      </svg>
    </nav>
  );
}

/* ---------- map visual with its header and frame ---------- */

function MapVisual() {
  const grip = "absolute bg-[#979593]";
  return (
    <section className="w-[1092px] shrink-0">
      <header className="flex h-[95px] items-start justify-end pr-[11px] pt-[56px]">
        <svg viewBox="0 0 4 32" className="mr-[70px] h-[32px] w-[4px]">
          <path d="M0 0h4v4H0zM0 8h4v24H0z" fill="#7a9cc6" />
        </svg>
        <svg viewBox="0 0 32 30" className="mr-[26px] h-[30px] w-[32px]">
          <path d="M1 2.5h30v2L19 17v12.5h-6V17L1 4.500z" fill="none" stroke="#797775" strokeWidth="1.6" />
        </svg>
        <svg viewBox="0 0 28 26" className="mr-[28px] mt-[4px] h-[26px] w-[28px]">
          <path d="M13 2H1v22h26V14M1 16.500h12V24M17 2h10v9M27 2L16.500 12.500" fill="none" stroke="#797775" strokeWidth="1.6" />
        </svg>
        <svg viewBox="0 0 30 6" className="mt-[12px] h-[6px] w-[30px]">
          <path d="M3 .5a2.500 2.500 0 1 0 .01 0M15 .5a2.500 2.500 0 1 0 .01 0M27 .5a2.500 2.500 0 1 0 .01 0" fill="#797775" />
        </svg>
      </header>
      <div className="relative ml-[4px] h-[856px] w-[1088px] border-2 border-[#c8c6c4] pl-[5px]">
        <span className={`${grip} -left-[4px] -top-[4px] h-[8px] w-[20px]`} />
        <span className={`${grip} -left-[4px] -top-[4px] h-[20px] w-[8px]`} />
        <span className={`${grip} -right-[4px] -top-[4px] h-[8px] w-[20px]`} />
        <span className={`${grip} -right-[4px] -top-[4px] h-[20px] w-[8px]`} />
        <span className={`${grip} -bottom-[4px] -left-[4px] h-[8px] w-[20px]`} />
        <span className={`${grip} -bottom-[4px] -left-[4px] h-[20px] w-[8px]`} />
        <span className={`${grip} -bottom-[4px] -right-[4px] h-[8px] w-[20px]`} />
        <span className={`${grip} -bottom-[4px] -right-[4px] h-[20px] w-[8px]`} />
        <span className={`${grip} -top-[4px] left-[530px] h-[8px] w-[24px]`} />
        <span className={`${grip} -bottom-[4px] left-[530px] h-[8px] w-[24px]`} />
        <span className={`${grip} -left-[4px] top-[414px] h-[24px] w-[8px]`} />
        <span className={`${grip} -right-[4px] top-[414px] h-[24px] w-[8px]`} />
        <h2 className="relative h-[33px] pt-px text-[#252423]">
          <Fit w={148} className="font-['Roboto',sans-serif] text-[22.5px] leading-[24px]">Codigo Postal</Fit>
        </h2>
        <IberiaMap />
      </div>
    </section>
  );
}

/* ---------- visualization gallery ---------- */

const K = "#3b3a39";
const B = "#0063b1";
const L = "#83beec";
const G = "#797775";
const S = "#c8c6c4";
const W = "#fafafa";
const axes = <path d="M3 0v105h105" fill="none" stroke={K} strokeWidth="6" />;

type BoxProps = { x: number; y: number; w: number; h: number; s?: string; f?: string };
/* Outlined rectangle; x, y, w and h are the outer edges. */
function Box({ x, y, w, h, s = K, f = W }: BoxProps) {
  return <rect x={x + 3} y={y + 3} width={w - 6} height={h - 6} fill={f} stroke={s} strokeWidth="6" />;
}

const ICONS: ReactNode[] = [
  <><Box x={0} y={12} w={36} h={30} /><Box x={30} y={12} w={42} h={30} s={B} f={L} /><Box x={0} y={60} w={48} h={30} /><Box x={42} y={60} w={54} h={30} s={G} f={S} />{axes}</>,
  <><Box x={18} y={66} w={30} h={42} /><Box x={18} y={30} w={30} h={42} s={B} f={L} /><Box x={66} y={60} w={30} h={48} /><Box x={66} y={12} w={30} h={54} s={G} f={S} />{axes}</>,
  <><Box x={0} y={4} w={105} h={25} s={B} f={L} /><Box x={0} y={26} w={63} h={22} /><Box x={0} y={54} w={50} h={22} s={G} f={S} /><Box x={0} y={74} w={79} h={25} />{axes}</>,
  <><Box x={8} y={4} w={28} h={104} s={B} f={L} /><Box x={32} y={44} w={22} h={64} /><Box x={57} y={58} w={24} h={50} s={G} f={S} /><Box x={79} y={28} w={27} h={80} />{axes}</>,
  <><Box x={0} y={12} w={30} h={30} /><Box x={24} y={12} w={72} h={30} s={B} f={L} /><Box x={0} y={60} w={66} h={30} /><Box x={60} y={60} w={36} h={30} s={G} f={S} />{axes}</>,
  <><Box x={18} y={78} w={30} h={30} /><Box x={18} y={12} w={30} h={72} s={B} f={L} /><Box x={66} y={42} w={30} h={66} /><Box x={66} y={12} w={30} h={36} s={G} f={S} />{axes}</>,

  <><path d="M3 60l36-34l30 32l37-36v83H3z" fill={W} /><g fill="none" strokeWidth="6"><path d="M3 84L69 20l37 36" stroke="#1f7fc4" /><path d="M3 60L39 26l30 32l37-37" stroke={K} /></g>{axes}</>,
  <><path d="M62 40L84 4l21 42v57H66z" fill={S} stroke={G} strokeWidth="5" /><path d="M3 68L37 10l30 34l-34 48z" fill={W} stroke={K} strokeWidth="5" /><path d="M3 70l30 22l32-46l38 57H3z" fill={L} stroke={B} strokeWidth="6" /></>,
  <><path d="M3 58l36 32l36-38l33 32v21H3z" fill={W} /><path d="M3 24l34 29l37-37l17 17h17v48L75 48L36 87L3 56z" fill={L} /><path d="M3 24l34 29l37-37l17 17h17M3 56l33 31l39-39l33 34" fill="none" stroke={B} strokeWidth="5" />{axes}</>,
  <><Box x={18} y={80} w={30} h={28} /><Box x={18} y={12} w={30} h={70} s={B} f={L} /><Box x={66} y={42} w={30} h={66} /><Box x={66} y={12} w={30} h={34} s={G} f={S} />{axes}<path d="M3 96L39 58l28 24l40-38" fill="none" stroke={K} strokeWidth="5" /></>,
  <><Box x={18} y={48} w={30} h={60} s={B} f={L} /><Box x={42} y={6} w={30} h={102} /><Box x={66} y={30} w={30} h={78} s={G} f={S} />{axes}<path d="M3 96L39 58l28 24l40-38" fill="none" stroke={K} strokeWidth="5" /></>,
  <><path d="M12 66h42v20H12zM54 56h48v30H54z" fill="#f7b566" /><path d="M14 84h18M14 70h16M38 58h26M76 70h24M70 84h30" fill="none" stroke="#e07000" strokeWidth="7" /><path d="M13 28c24 4 22 14 42 14s24-20 46-22" fill="none" stroke={G} strokeWidth="22" /><path d="M13 28c24 4 22 14 42 14s24-20 46-22" fill="none" stroke={S} strokeWidth="11" /><path d="M13 48c26 0 20 32 42 32s20-32 46-34" fill="none" stroke={B} strokeWidth="22" /><path d="M13 48c26 0 20 32 42 32s20-32 46-34" fill="none" stroke={L} strokeWidth="11" />{axes}</>,

  <><Box x={12} y={30} w={24} h={78} /><rect x="42" y="30" width="18" height="36" fill="#a19f9d" stroke={G} strokeWidth="3" /><rect x="60" y="6" width="12" height="60" fill={B} /><Box x={78} y={6} w={24} h={102} />{axes}</>,
  <><Box x={30} y={66} w={48} h={36} s={B} f={L} /><Box x={12} y={36} w={84} h={36} s={B} f={L} /><Box x={0} y={6} w={108} h={36} s={B} f={L} /></>,
  <>{axes}<path d="M78 6h18v18H78zM18 72h18v18H18z" fill={K} /><path d="M18 24h18v18H18zM48 42h18v18H48zM78 66h18v18H78z" fill={L} /></>,
  <><circle cx="54" cy="54" r="51" fill={W} stroke={K} strokeWidth="6" /><path d="M51 3a51 51 0 0 1 38 88L51 56z" fill={L} stroke={B} strokeWidth="6" /></>,
  <><circle cx="54" cy="54" r="39" fill="none" stroke={G} strokeWidth="30" /><circle cx="54" cy="54" r="39" fill="none" stroke={W} strokeWidth="18" /><path d="M54 3a51 51 0 1 1-51 54h24a27 27 0 1 0 27-30z" fill={L} stroke={B} strokeWidth="6" /></>,
  <><Box x={0} y={0} w={108} h={108} /><path d="M54 33h51M75 33v72M75 69h30" stroke={K} strokeWidth="6" /><Box x={0} y={0} w={54} h={60} s={B} f={L} /><Box x={0} y={54} w={54} h={54} s={B} f={L} /></>,

  <><circle cx="60" cy="47" r="34" fill={W} stroke={K} strokeWidth="5" /><path d="M52 16l-8 4l-10 20c6 4 10 8 16 6l4-12zM62 14c10 2 22 10 26 20l-8 8l-14-4l-4-8zM40 56c10-4 22 0 28 6l-6 16c-8 0-18-6-22-22zM78 56l12-2c-2 10-8 18-14 20z" fill="#2f9e44" /><path d="M53 3C20 8 4 40 22 68c18 24 52 26 74 4M55 86v18M18 105h78" fill="none" stroke={K} strokeWidth="6" /></>,
  <><path d="M12 56v8c-4 10 2 14 12 20l14 18l8 8l8-8h40l14-36V12H84L70 24H48z" fill="#c8c6c4" /><path d="M50 21h22l12-12h21v40M4 56c-6 20 6 20 16 24c0 12 8 18 22 24l8 7l8-8" fill="none" stroke={K} strokeWidth="6" /><path d="M3 9h40v14l10 28H4l6-14l-7-14z" fill={L} stroke={B} strokeWidth="6" /><path d="M62 51h43c0 22-4 30-22 34l-8 13l-10-8H51l8-18z" fill={L} stroke={B} strokeWidth="6" /></>,
  <><path d="M3 75a51 51 0 0 1 102 0H78a24 24 0 0 0-48 0z" fill={W} stroke={K} strokeWidth="6" /><path d="M30 32a51 51 0 0 1 75 43H78A24 24 0 0 0 43 54z" fill={L} stroke={B} strokeWidth="6" /><path d="M76 50L62 74a8 8 0 1 1-10-8z" fill={K} stroke={K} strokeWidth="3" /></>,
  <><Box x={0} y={12} w={108} h={84} /><text x="12" y="70" fontSize="58" textLength="84" lengthAdjust="spacingAndGlyphs" fill="#2b8fd6">123</text><path d="M12 81h84" stroke={G} strokeWidth="6" /></>,
  <><Box x={0} y={0} w={108} h={108} /><path d="M21 18v72M30 45h30M30 81h30" stroke={G} strokeWidth="6" /><path d="M30 30h60M30 66h60" stroke={B} strokeWidth="12" /></>,
  <><Box x={0} y={6} w={108} h={90} /><path d="M33 28l16 28H16z" fill="#8fd19e" stroke="#2b8a3e" strokeWidth="5" /><path d="M58 28h34L75 54z" fill="#f7a1a5" stroke="#e02020" strokeWidth="5" /><path d="M12 75h84" stroke={G} strokeWidth="6" /></>,

  <><path d="M3 3h102v102H3z" fill={W} /><path d="M3 3h102v18H3z" fill={S} /><path d="M105 48V3H3v102h63M3 21h102" fill="none" stroke={K} strokeWidth="6" /><Box x={18} y={36} w={24} h={24} s={G} f={S} /><Box x={18} y={66} w={24} h={24} s={G} f={S} /><path d="M57 57h54v11L93 86v24H77V86L57 68z" fill={W} stroke={K} strokeWidth="6" /></>,
  <><Box x={0} y={0} w={108} h={108} /><path d="M6 6h96v12H6z" fill={S} /><path d="M39 24v78M69 24v78M6 51h96M6 78h96" stroke={G} strokeWidth="6" /><path d="M0 21h108" stroke={K} strokeWidth="6" /></>,
  <><Box x={0} y={0} w={108} h={108} /><path d="M6 6h96v12H6z" fill={S} /><path d="M69 24h33v78H6V75h63z" fill={L} /><path d="M39 24v48M6 51h60" stroke={G} strokeWidth="6" /><path d="M69 24v78M6 75h96M39 75v27M69 51h33" stroke={B} strokeWidth="6" /><path d="M0 21h108M3 0v105h102V0" stroke={K} strokeWidth="6" fill="none" /></>,
  <text x="17" y="90" fontSize="100" textLength="60" lengthAdjust="spacingAndGlyphs" fill="#1f87cf" className="font-semibold">R</text>,
  <text x="-8" y="77" fontSize="100" textLength="117" lengthAdjust="spacingAndGlyphs" fill="#1f87cf" className="font-semibold">Py</text>,
  <>{axes}<path d="M6 21h68" stroke="#1f7fc4" strokeWidth="6" /><path d="M6 51h50M6 75h28" stroke={G} strokeWidth="6" /><circle cx="87" cy="21" r="13" fill={L} stroke={B} strokeWidth="6" /><circle cx="63" cy="51" r="7" fill={S} stroke={G} strokeWidth="5" /><circle cx="39" cy="75" r="7" fill={S} stroke={G} strokeWidth="5" /></>,

  <><path d="M42 51h24M68 15H57v72h11" fill="none" stroke={K} strokeWidth="6" /><Box x={0} y={36} w={42} h={30} s={B} f={L} /><Box x={66} y={0} w={42} h={30} s={B} f={L} /><Box x={66} y={36} w={42} h={30} s={B} f={L} /><Box x={66} y={72} w={42} h={30} s={B} f={L} /></>,
  <path d="M3 9h102v66H45L21 99V75H3z" fill={W} stroke={B} strokeWidth="6" />,
  <><path d="M15 3h51l27 29v73H15z" fill={W} /><path d="M15 30V3h51l27 29v73H15V54M63 3v30h30" fill="none" stroke={K} strokeWidth="6" /><path d="M42 51h36M30 69h36" stroke="#1f7fc4" strokeWidth="6" /><circle cx="18" cy="42" r="15" fill="#f3f2f1" /><circle cx="18" cy="42" r="9" fill={L} stroke={B} strokeWidth="5" /></>,
  <><path d="M27 9H4c0 22 0 38 27 40M81 9h23c0 22 0 38-27 40" fill={W} stroke={K} strokeWidth="6" /><path d="M27 15h54v36c0 32-54 32-54 0z" fill={W} stroke={K} strokeWidth="6" /><path d="M39 94c0-22 30-22 30 0z" fill={W} stroke={K} strokeWidth="6" /><Box x={24} y={0} w={60} h={18} s={B} f={L} /><Box x={24} y={90} w={60} h={18} s={B} f={L} /></>,
  <><path d="M9-3h53l28 32v81H9zM59-3v34h31" fill={W} stroke={K} strokeWidth="6" /><path d="M22 60h15v38H22zM44 75h15v23H44zM67 46h15v52H67z" fill={K} /></>,
  <><path d="M3 50v55h62L105 60V3H36z" fill={W} /><path d="M60 94c-18-2-24-2-12-16c6-14-8-16-4-24c20 0 12-20 26-32l20 4l15 14v6L78 66l-12 36z" fill={L} /><path d="M38 3h67v42C84 48 74 60 64 68s0 20 6 37H3V60" fill="none" stroke={B} strokeWidth="6" /><path d="M0 36L0 0h36v36L18 62z" fill="#f3f2f1" /><path d="M-6-6h36v40L12 60L-6 36z" fill="#de6c00" /><circle cx="12" cy="18" r="9" fill={W} /><circle cx="93" cy="93" r="21" fill="#f3f2f1" /><circle cx="93" cy="93" r="15" fill="#de6c00" /><circle cx="105" cy="63" r="9" fill="#de6c00" /></>,

  <g strokeLinejoin="round"><path d="M42 5h20l44 48l-44 50H42L2 53z" fill={W} /><g fill="none" stroke="#9232a0" strokeWidth="5"><path d="M44 5L2 53l42 50M44 5l14 14M44 103l14-14" /><path d="M62 5l44 48l-44 50l-20-22l20-28L42 25zM42 25L90 74M42 81L88 33" /></g></g>,
  <g strokeLinejoin="round" fill={W} stroke="#0078e4" strokeWidth="5"><path d="M3 9h68l34 41l-34 43H3l34-43z" /><path d="M71 9L3 88M90 30L38 92" fill="none" /></g>,
  <path d="M17 39a6 6 0 1 0 .01 0M53 39a6 6 0 1 0 .01 0M89 39a6 6 0 1 0 .01 0" fill="#252423" />,
];

function Gallery() {
  return (
    <div className="ml-[12px] mt-[16px] grid grid-cols-[repeat(6,56px)] auto-rows-[56px]">
      {ICONS.map((icon, i) => (
        <div key={i} className="flex items-center justify-center">
          <div
            className={
              i === 19
                ? "flex h-[48px] w-[48px] items-center justify-center border-2 border-[#797775] bg-[#d2d0ce]"
                : "flex h-[48px] w-[48px] items-center justify-center"
            }
          >
            <svg viewBox="0 0 108 108" className="h-[36px] w-[36px] shrink-0 overflow-visible">
              {icon}
            </svg>
          </div>
        </div>
      ))}
    </div>
  );
}

/* ---------- right panes ---------- */

function FiltersPane() {
  return (
    <aside className="flex w-[68px] shrink-0 flex-col border-x-2 border-l-[#b3b0ad] border-r-[#e1dfdd] bg-white pl-[20px] text-[#252423]">
      <svg viewBox="0 0 26 26" className="mt-[22px] h-[26px] w-[26px] shrink-0">
        <path d="M13.500 1L2 13l11.500 12M25 1L13.500 13L25 25" fill="none" stroke="#252423" strokeWidth="1.8" />
      </svg>
      <svg viewBox="0 0 24 26" className="ml-[4px] mt-[31px] h-[26px] w-[24px] shrink-0">
        <path d="M22 1.500v23L12 15H2v-4h10z" fill="none" stroke="#252423" strokeWidth="2" />
      </svg>
      <div className="mt-[16px] h-[90px] w-[26px] [writing-mode:vertical-rl]">
        <span className="text-[29.5px] font-medium leading-[26px]">Filtros</span>
      </div>
    </aside>
  );
}

function Tabs() {
  return (
    <div className="flex pl-[16px]">
      <div className="flex h-[64px] w-[64px] items-center justify-center rounded-[3px] bg-[#d2d0ce]">
        <svg viewBox="0 0 48 48" className="h-[48px] w-[48px]">
          <path d="M0 1h38" stroke="#252423" strokeWidth="2" />
          <path d="M2.500 12h43v12.500h-43zM2.500 34h43v11.500h-43z" fill="#117865" />
          <path d="M1 10.500h46v15H1zM1 32.500h46v14.500H1z" fill="none" stroke="#252423" strokeWidth="2" strokeDasharray="4 2.500" />
        </svg>
      </div>
      <div className="ml-[70px] flex h-[64px] w-[64px] items-center justify-center">
        <svg viewBox="0 0 48 48" className="h-[48px] w-[48px]">
          <path d="M4 39V20h11M16 36V3h13v22M29 13h12" fill="none" stroke="#252423" strokeWidth="2" />
          <path d="M45.500 18c-8 4-15 13-19.500 19l3.500 3.500C35.500 35 44.500 25 45.500 18zM26 37c-6-1-5 6-6.500 7s-5 .5-9 0c6 5 17 3 19-3.500z" fill="#f3f2f1" stroke="#252423" strokeWidth="1.8" strokeLinejoin="round" />
        </svg>
      </div>
      <div className="ml-[66px] flex h-[64px] w-[64px] items-center justify-center">
        <svg viewBox="0 0 48 48" className="h-[48px] w-[48px]">
          <circle cx="20.500" cy="20.500" r="19.500" fill="none" stroke="#252423" strokeWidth="2" />
          <path d="M2 21l9-4l8 5l18-12M10.500 24v12M18 27v12M25 24v14M32 19v14" fill="none" stroke="#252423" strokeWidth="2" />
          <path d="M34.500 34.500L46.500 46.500" stroke="#252423" strokeWidth="4.500" />
        </svg>
      </div>
    </div>
  );
}

function FieldLabel({ w, className = "", children }: { w: number; className?: string; children: string }) {
  return (
    <div className={`pl-[16px] ${className}`}>
      <Fit w={w} className="text-[22.5px] leading-[32px]">{children}</Fit>
    </div>
  );
}

function EmptyWell() {
  return (
    <div className="mt-[10px] flex h-[56px] w-[340px] items-center rounded-[4px] border-2 border-dashed border-[#c8c6c4] bg-white pl-[20px] pt-[4px]">
      <Fit w={309} className="text-[22.5px] leading-[32px]">Agregar campos de datos a...</Fit>
    </div>
  );
}

function Visualizations() {
  return (
    <aside className="flex w-[362px] shrink-0 flex-col border-r-2 border-[#e1dfdd] bg-[#f3f2f1] text-[#252423]">
      <div className="flex h-[72px] items-center justify-between pl-[16px] pr-[15px]">
        <Fit w={218} className="text-[31px] font-medium leading-[40px]">Visualizaciones</Fit>
        <svg viewBox="0 0 26 26" className="h-[26px] w-[26px]">
          <path d="M1 1l11.500 12L1 25M12.500 1L24 13L12.500 25" fill="none" stroke="#252423" strokeWidth="1.8" />
        </svg>
      </div>
      <div className="h-[40px] pl-[16px]">
        <Fit w={166} className="text-[22.5px] font-medium leading-[35px]">Compilar visual</Fit>
      </div>
      <Tabs />
      <div className="mt-[9px] flex items-end">
        <span className="h-[2px] w-[32px] bg-[#8a8886]" />
        <svg viewBox="0 0 32 17" className="h-[17px] w-[32px] shrink-0">
          <path d="M0 16L16 1l16 15" fill="none" stroke="#8a8886" strokeWidth="2" />
        </svg>
        <span className="h-[2px] grow bg-[#8a8886]" />
      </div>
      <Gallery />
      <div className="mt-[12px] flex h-[416px] border-t-2 border-[#e1dfdd]">
        <div className="w-[348px] pl-[8px] text-[#323130]">
          <FieldLabel w={104} className="-mt-[3px]">Ubicación</FieldLabel>
          <div className="mt-[10px] h-[74px] w-[340px] rounded-[4px] border-2 border-dashed border-[#c8c6c4] bg-white p-[4px] pt-[6px]">
            <div className="flex h-[46px] items-center rounded-[4px] border-2 border-[#c8c6c4] bg-[#edebe9] pl-[8px]">
              <div className="w-[256px] pt-[3px]">
                <Fit w={146} className="text-[22.5px] leading-[32px]">Codigo Postal</Fit>
              </div>
              <svg viewBox="0 0 24 14" className="-mt-[1px] h-[14px] w-[24px]">
                <path d="M1 1l11 11L23 1" fill="none" stroke="#252423" strokeWidth="1.6" />
              </svg>
              <svg viewBox="0 0 18 18" className="ml-[11px] h-[18px] w-[18px]">
                <path d="M1 1l16 16M17 1L1 17" fill="none" stroke="#252423" strokeWidth="1.6" />
              </svg>
            </div>
          </div>
          <FieldLabel w={87} className="mt-[22px]">Leyenda</FieldLabel>
          <EmptyWell />
          <FieldLabel w={72} className="mt-[22px]">Latitud</FieldLabel>
          <EmptyWell />
          <FieldLabel w={94} className="mt-[22px]">Longitud</FieldLabel>
        </div>
        <div className="mt-[22px] w-[12px] rounded-t-full bg-[#d2d0ce]" />
      </div>
    </aside>
  );
}

export default function App() {
  return (
    <div className="relative flex h-[1038px] w-[2367px] overflow-hidden bg-[#f8f8f8] font-['Noto_Sans','Open_Sans',sans-serif]">
      <Rail />
      <main className="flex w-[1864px] shrink-0 bg-white">
        <div className="w-[660px] shrink-0">
          <SalesChart />
          <CountrySlicer />
        </div>
        <MapVisual />
      </main>
      <FiltersPane />
      <Visualizations />
      <div className="pointer-events-none absolute inset-x-0 top-0 h-[8px] bg-gradient-to-b from-black/15 to-transparent" />
    </div>
  );
}
